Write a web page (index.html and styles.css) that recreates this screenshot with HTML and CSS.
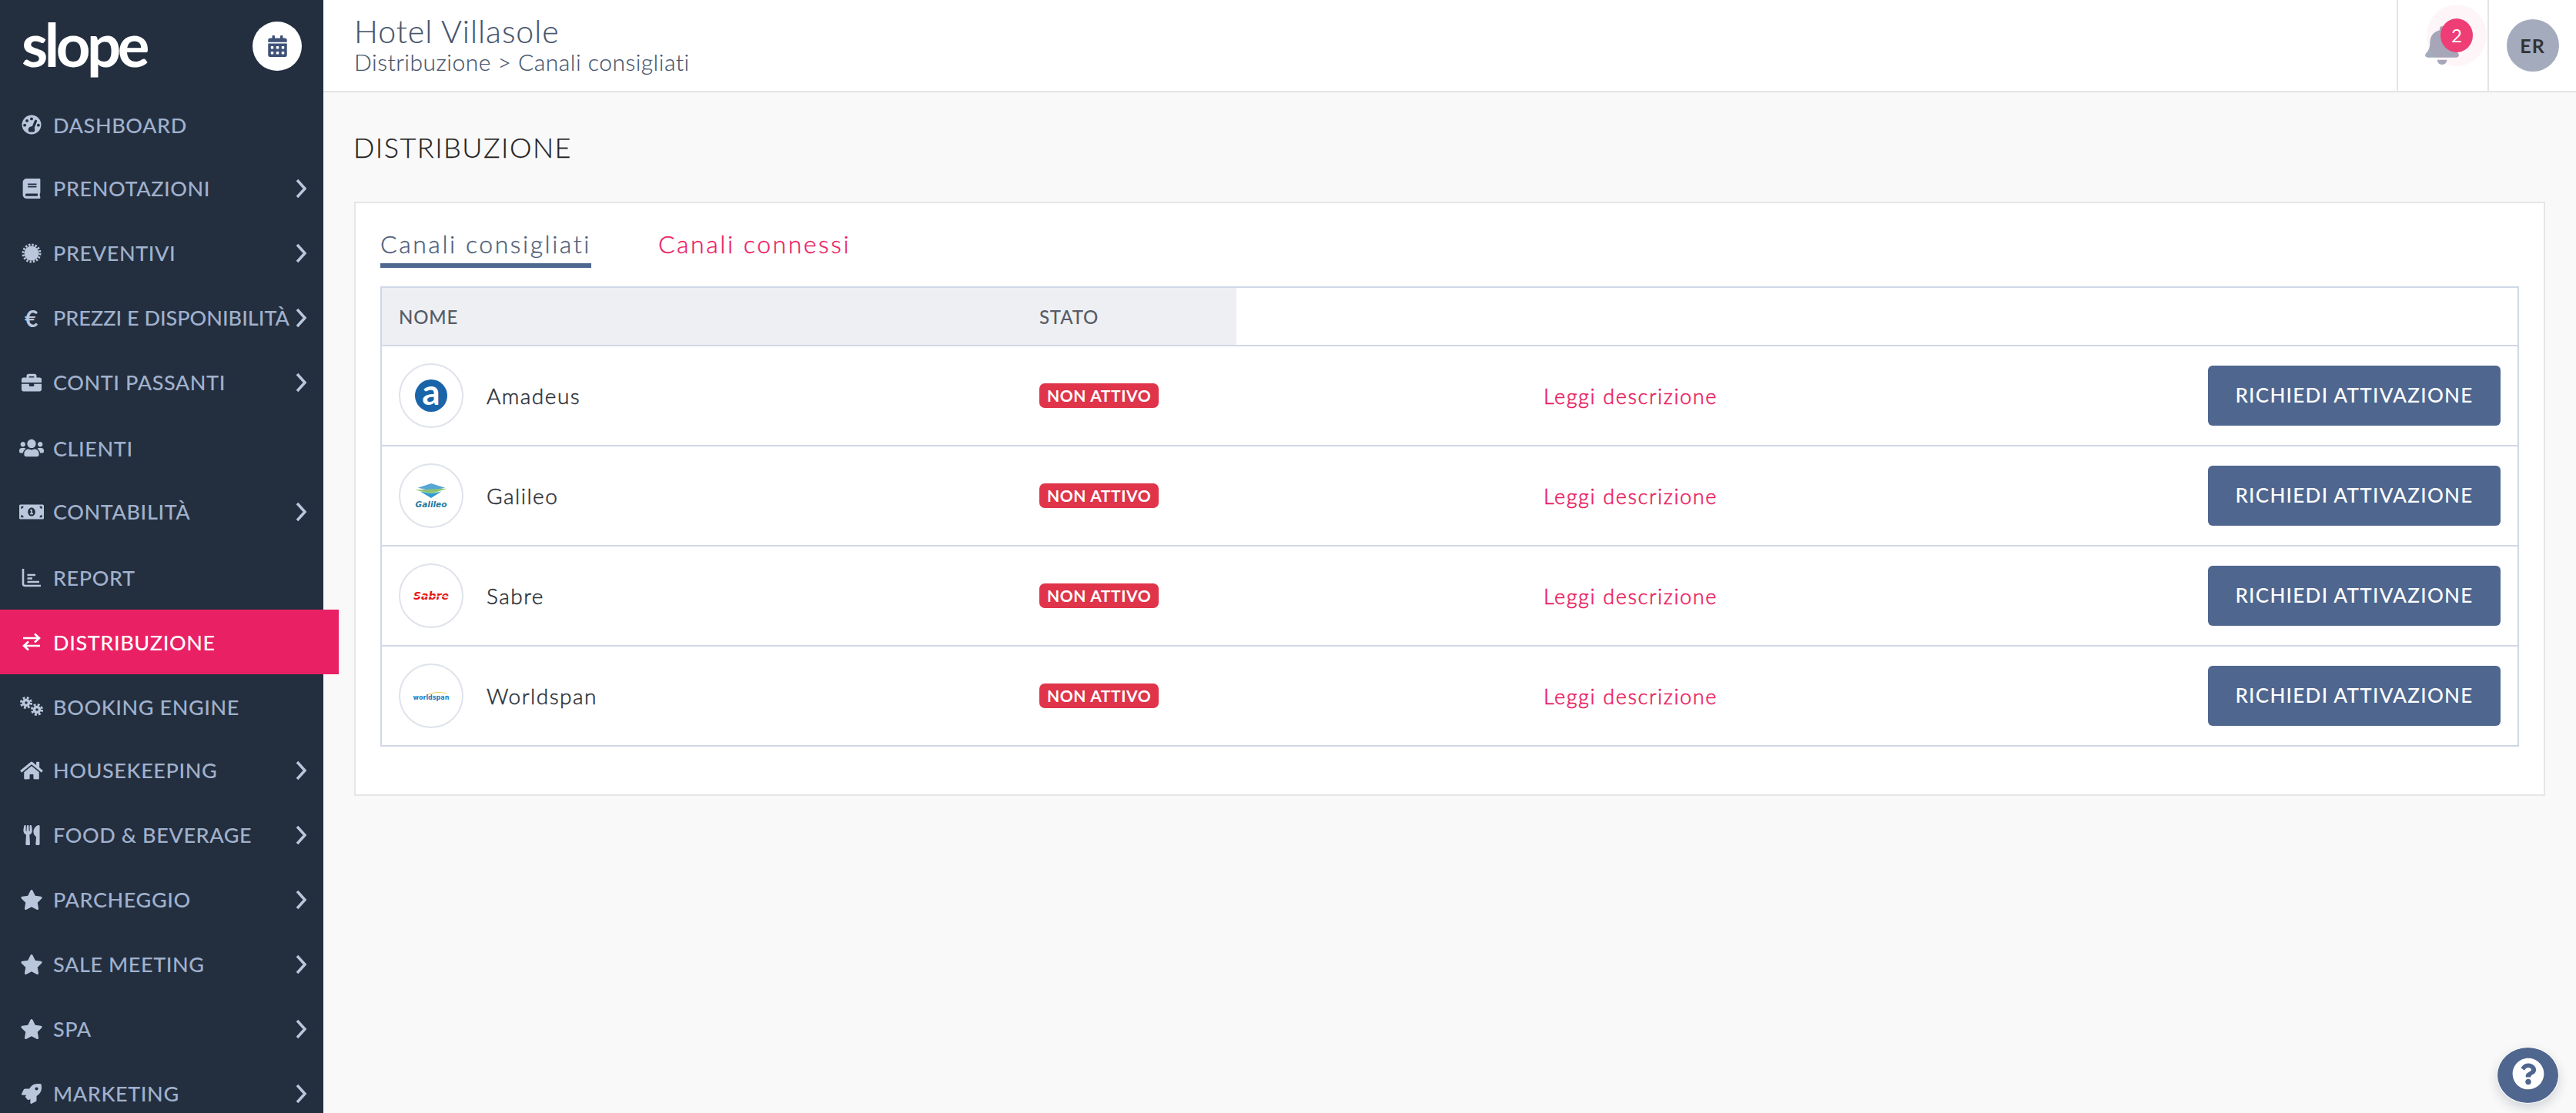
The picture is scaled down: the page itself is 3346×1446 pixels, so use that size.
FILE: index.html
```html
<!DOCTYPE html>
<html lang="it">
<head>
    <meta charset="UTF-8">
    <meta name="viewport" content="width=device-width, initial-scale=1.0">
    <title>Distribuzione - Slope</title>
    <link rel="stylesheet" href="styles.css">
</head>
<body>
    <aside class="sidebar">
        <div class="brand">
            <span class="logo">slope</span>
            <a class="calendar-btn" href="#">
                <svg viewBox="0 0 448 512"><path d="M0 464c0 26.500 21.500 48 48 48h352c26.500 0 48-21.500 48-48V192H0v272zm320-196c0-6.600 5.400-12 12-12h40c6.600 0 12 5.400 12 12v40c0 6.600-5.400 12-12 12h-40c-6.600 0-12-5.400-12-12v-40zm0 128c0-6.600 5.400-12 12-12h40c6.600 0 12 5.400 12 12v40c0 6.600-5.400 12-12 12h-40c-6.600 0-12-5.400-12-12v-40zM192 268c0-6.600 5.400-12 12-12h40c6.600 0 12 5.400 12 12v40c0 6.600-5.400 12-12 12h-40c-6.600 0-12-5.400-12-12v-40zm0 128c0-6.600 5.400-12 12-12h40c6.600 0 12 5.400 12 12v40c0 6.600-5.400 12-12 12h-40c-6.600 0-12-5.400-12-12v-40zM64 268c0-6.600 5.400-12 12-12h40c6.600 0 12 5.400 12 12v40c0 6.600-5.400 12-12 12H76c-6.600 0-12-5.400-12-12v-40zm0 128c0-6.600 5.400-12 12-12h40c6.600 0 12 5.400 12 12v40c0 6.600-5.400 12-12 12H76c-6.600 0-12-5.400-12-12v-40zM400 64h-48V16c0-8.800-7.200-16-16-16h-32c-8.800 0-16 7.200-16 16v48H160V16c0-8.800-7.200-16-16-16h-32c-8.800 0-16 7.200-16 16v48H48C21.500 64 0 85.500 0 112v48h448v-48c0-26.500-21.500-48-48-48z"/></svg>
            </a>
        </div>
        <nav class="menu">
            <a class="menu-item" href="#">
                <svg class="menu-icon" viewBox="0 0 24 24"><path fill-rule="evenodd" d="M12 .5a11.500 11.500 0 1 0 0 23 11.500 11.500 0 0 0 0-23zM12 3.200a1.800 1.800 0 1 1 0 3.600 1.800 1.800 0 0 1 0-3.600zM6.500 5.500a1.800 1.800 0 1 1 0 3.600 1.800 1.800 0 0 1 0-3.600zM3.800 10.800a1.800 1.800 0 1 1 0 3.600 1.800 1.800 0 0 1 0-3.600zM20.200 10.800a1.800 1.800 0 1 1 0 3.600 1.800 1.800 0 0 1 0-3.600zM17.500 6.200a1.500 1.500 0 0 1 1 1.900l-3.200 7.800a3.600 3.600 0 0 1 .7 2.100c0 1-.4 2-1 2.700H9c-.6-.7-1-1.700-1-2.700a4 4 0 0 1 4.700-3.900l3-7.200a1.500 1.500 0 0 1 1.800-.7z"/></svg>
                <span class="menu-label">DASHBOARD</span>
            </a>
            <a class="menu-item" href="#">
                <svg class="menu-icon" viewBox="0 0 448 512"><path d="M448 360V24c0-13.300-10.700-24-24-24H96C43 0 0 43 0 96v320c0 53 43 96 96 96h328c13.300 0 24-10.700 24-24v-16c0-7.500-3.500-14.300-8.900-18.700-4.200-15.400-4.200-59.300 0-74.700 5.400-4.300 8.900-11.100 8.900-18.600zM128 134c0-3.300 2.700-6 6-6h212c3.300 0 6 2.700 6 6v20c0 3.300-2.700 6-6 6H134c-3.300 0-6-2.700-6-6v-20zm0 64c0-3.300 2.700-6 6-6h212c3.300 0 6 2.700 6 6v20c0 3.300-2.700 6-6 6H134c-3.300 0-6-2.700-6-6v-20zm253.400 250H96c-17.700 0-32-14.300-32-32 0-17.600 14.400-32 32-32h285.400c-1.900 17.100-1.900 46.900 0 64z"/></svg>
                <span class="menu-label">PRENOTAZIONI</span>
                <svg class="chevron" viewBox="0 0 14 26"><path d="M2 2l10 11L2 24"/></svg>
            </a>
            <a class="menu-item" href="#">
                <svg class="menu-icon" viewBox="0 0 26 26"><circle cx="13" cy="13" r="9.500"/><circle class="teeth" cx="13" cy="13" r="11" stroke-dasharray="2.400 1.920"/></svg>
                <span class="menu-label">PREVENTIVI</span>
                <svg class="chevron" viewBox="0 0 14 26"><path d="M2 2l10 11L2 24"/></svg>
            </a>
            <a class="menu-item" href="#">
                <span class="menu-icon euro">€</span>
                <span class="menu-label tight">PREZZI E DISPONIBILITÀ</span>
                <svg class="chevron" viewBox="0 0 14 26"><path d="M2 2l10 11L2 24"/></svg>
            </a>
            <a class="menu-item" href="#">
                <svg class="menu-icon" viewBox="0 0 512 512"><path d="M320 336c0 8.840-7.160 16-16 16h-96c-8.840 0-16-7.160-16-16v-48H0v144c0 25.600 22.400 48 48 48h416c25.600 0 48-22.400 48-48V288H320v48zm144-208h-80V80c0-25.600-22.400-48-48-48H176c-25.600 0-48 22.400-48 48v48H48c-25.600 0-48 22.400-48 48v80h512v-80c0-25.600-22.400-48-48-48zm-144 0H192V96h128v32z"/></svg>
                <span class="menu-label">CONTI PASSANTI</span>
                <svg class="chevron" viewBox="0 0 14 26"><path d="M2 2l10 11L2 24"/></svg>
            </a>
            <a class="menu-item" href="#">
                <svg class="menu-icon wide" viewBox="0 0 640 512"><path d="M96 224c35.300 0 64-28.700 64-64s-28.700-64-64-64-64 28.700-64 64 28.700 64 64 64zm448 0c35.300 0 64-28.700 64-64s-28.700-64-64-64-64 28.700-64 64 28.700 64 64 64zm32 32h-64c-17.600 0-33.500 7.100-45.100 18.600 40.300 22.100 68.900 62 75.100 109.400h66c17.700 0 32-14.300 32-32v-32c0-35.300-28.700-64-64-64zm-256 0c61.900 0 112-50.100 112-112S381.900 32 320 32 208 82.100 208 144s50.100 112 112 112zm76.800 32h-8.300c-20.800 10-43.900 16-68.500 16s-47.600-6-68.500-16h-8.300C179.600 288 128 339.600 128 403.200V432c0 26.500 21.500 48 48 48h288c26.500 0 48-21.500 48-48v-28.800c0-63.600-51.600-115.200-115.200-115.200zm-223.700-13.400C161.500 263.100 145.600 256 128 256H64c-35.300 0-64 28.700-64 64v32c0 17.700 14.300 32 32 32h65.900c6.300-47.400 34.900-87.300 75.200-109.400z"/></svg>
                <span class="menu-label">CLIENTI</span>
            </a>
            <a class="menu-item" href="#">
                <svg class="menu-icon wide" viewBox="0 0 640 512"><path d="M352 288h-16v-88c0-4.420-3.580-8-8-8h-13.580c-4.740 0-9.370 1.400-13.310 4.030l-15.330 10.220a7.994 7.994 0 0 0-2.220 11.090l8.880 13.310a7.994 7.994 0 0 0 11.090 2.220l.47-.31V288h-16c-4.420 0-8 3.580-8 8v16c0 4.420 3.580 8 8 8h64c4.420 0 8-3.580 8-8v-16c0-4.420-3.580-8-8-8zM608 64H32C14.330 64 0 78.330 0 96v320c0 17.670 14.330 32 32 32h576c17.670 0 32-14.330 32-32V96c0-17.670-14.330-32-32-32zM48 400v-64c35.350 0 64 28.650 64 64H48zm0-224v-64h64c0 35.350-28.650 64-64 64zm272 192c-53 0-96-50.150-96-112 0-61.860 43-112 96-112s96 50.140 96 112c0 61.870-43.010 112-96 112zm272 32h-64c0-35.350 28.650-64 64-64v64zm0-224c-35.350 0-64-28.650-64-64h64v64z"/></svg>
                <span class="menu-label">CONTABILITÀ</span>
                <svg class="chevron" viewBox="0 0 14 26"><path d="M2 2l10 11L2 24"/></svg>
            </a>
            <a class="menu-item" href="#">
                <svg class="menu-icon line" viewBox="0 0 26 26"><path d="M2 2v19.500q0 2.500 2.500 2.500H25"/><path d="M7.500 10H18M7.500 14.500H14M7.500 19H23"/></svg>
                <span class="menu-label">REPORT</span>
            </a>
            <a class="menu-item active" href="#">
                <svg class="menu-icon line" viewBox="0 0 26 26"><path d="M2 8h21M17 2.500L23 8l-6 5.500"/><path d="M24 18H3M9 12.500L3 18l6 5.500"/></svg>
                <span class="menu-label">DISTRIBUZIONE</span>
            </a>
            <a class="menu-item" href="#">
                <svg class="menu-icon wide" viewBox="0 0 32 26"><g transform="translate(9 8)"><circle class="hub" r="3.500"/><circle class="teeth" r="6.500" stroke-width="2.600" stroke-dasharray="2.800 2.300"/></g><g transform="translate(23 17)"><circle class="hub" r="3.500"/><circle class="teeth" r="6.500" stroke-width="2.600" stroke-dasharray="2.800 2.300"/></g></svg>
                <span class="menu-label">BOOKING ENGINE</span>
            </a>
            <a class="menu-item" href="#">
                <svg class="menu-icon wide" viewBox="0 0 576 512"><path d="M280.370 148.260L96 300.110V464a16 16 0 0 0 16 16l112.060-.29a16 16 0 0 0 15.920-16V368a16 16 0 0 1 16-16h64a16 16 0 0 1 16 16v95.640a16 16 0 0 0 16 16.050L464 480a16 16 0 0 0 16-16V300L295.670 148.260a12.190 12.190 0 0 0-15.300 0zM571.600 251.470L488 182.560V44.050a12 12 0 0 0-12-12h-56a12 12 0 0 0-12 12v72.610L318.470 43a48 48 0 0 0-61 0L4.340 251.470a12 12 0 0 0-1.600 16.900l25.500 31A12 12 0 0 0 45.150 301l235.220-193.740a12.190 12.190 0 0 1 15.300 0L530.900 301a12 12 0 0 0 16.900-1.600l25.500-31a12 12 0 0 0-1.700-16.930z"/></svg>
                <span class="menu-label">HOUSEKEEPING</span>
                <svg class="chevron" viewBox="0 0 14 26"><path d="M2 2l10 11L2 24"/></svg>
            </a>
            <a class="menu-item" href="#">
                <svg class="menu-icon" viewBox="0 0 416 512"><path d="M207.900 15.200c.8 4.700 16.100 94.500 16.100 128.800 0 52.300-27.800 89.600-68.900 104.600L168 486.700c.7 13.700-10.200 25.300-24 25.300H80c-13.700 0-24.700-11.500-24-25.300l12.900-238.100C27.700 233.600 0 196.200 0 144 0 109.600 15.300 19.900 16.100 15.200 19.300-5.100 61.400-5.400 64 16.300v141.200c1.300 3.400 15.100 3.200 16 0 1.400-25.300 7.900-139.200 8-141.800 3.300-20.800 44.700-20.800 47.900 0 .2 2.700 6.600 116.500 8 141.800.9 3.200 14.800 3.400 16 0V16.300c2.600-21.600 44.800-21.400 48 .1zm119.200 285.700l-15 185.100c-1.200 14 9.900 26 23.900 26h56c13.300 0 24-10.700 24-24V24c0-13.200-10.700-24-24-24-82.500 0-221.400 178.500-64.900 300.900z"/></svg>
                <span class="menu-label">FOOD &amp; BEVERAGE</span>
                <svg class="chevron" viewBox="0 0 14 26"><path d="M2 2l10 11L2 24"/></svg>
            </a>
            <a class="menu-item" href="#">
                <svg class="menu-icon wide" viewBox="0 0 576 512"><path d="M259.300 17.800L194 150.200 47.900 171.500c-26.200 3.800-36.700 36.100-17.700 54.600l105.700 103-25 145.500c-4.500 26.300 23.200 46 46.400 33.700L288 439.600l130.700 68.700c23.200 12.200 50.900-7.400 46.400-33.700l-25-145.500 105.700-103c19-18.500 8.500-50.800-17.700-54.600L382 150.200 316.700 17.800c-11.700-23.600-45.600-23.900-57.400 0z"/></svg>
                <span class="menu-label">PARCHEGGIO</span>
                <svg class="chevron" viewBox="0 0 14 26"><path d="M2 2l10 11L2 24"/></svg>
            </a>
            <a class="menu-item" href="#">
                <svg class="menu-icon wide" viewBox="0 0 576 512"><path d="M259.300 17.800L194 150.200 47.900 171.500c-26.200 3.800-36.700 36.100-17.700 54.600l105.700 103-25 145.500c-4.500 26.300 23.200 46 46.400 33.700L288 439.600l130.700 68.700c23.200 12.200 50.900-7.400 46.400-33.700l-25-145.500 105.700-103c19-18.500 8.500-50.800-17.700-54.600L382 150.200 316.700 17.800c-11.700-23.600-45.600-23.900-57.400 0z"/></svg>
                <span class="menu-label">SALE MEETING</span>
                <svg class="chevron" viewBox="0 0 14 26"><path d="M2 2l10 11L2 24"/></svg>
            </a>
            <a class="menu-item" href="#">
                <svg class="menu-icon wide" viewBox="0 0 576 512"><path d="M259.300 17.800L194 150.200 47.900 171.500c-26.200 3.800-36.700 36.100-17.700 54.600l105.700 103-25 145.500c-4.500 26.300 23.200 46 46.400 33.700L288 439.600l130.700 68.700c23.200 12.200 50.900-7.400 46.400-33.700l-25-145.500 105.700-103c19-18.500 8.500-50.800-17.700-54.600L382 150.200 316.700 17.800c-11.700-23.600-45.600-23.900-57.400 0z"/></svg>
                <span class="menu-label">SPA</span>
                <svg class="chevron" viewBox="0 0 14 26"><path d="M2 2l10 11L2 24"/></svg>
            </a>
            <a class="menu-item" href="#">
                <svg class="menu-icon" viewBox="0 0 512 512"><path d="M505.120 19.090c-1.190-5.530-6.660-11-12.210-12.190C460.720 0 435.510 0 410.410 0 307.180 0 245.270 55.200 199.050 128H94.840c-16.350.02-35.560 11.880-42.890 26.480L2.520 253.300A28.400 28.400 0 0 0 0 264a24 24 0 0 0 24 24h103.820l-22.480 22.470c-11.360 11.360-13 32.260 0 45.250l50.900 50.900c11.160 11.190 32.160 13.160 45.280 0l22.480-22.470V488a24 24 0 0 0 24 24 28.560 28.560 0 0 0 10.710-2.520l98.730-49.390c14.630-7.300 26.510-26.500 26.510-42.860V312.800c72.600-46.310 128.030-108.410 128.030-211.100.01-25.200.01-50.400-6.950-82.610zM384.040 168a40 40 0 1 1 40.010-40 40.020 40.020 0 0 1-40.010 40z"/></svg>
                <span class="menu-label">MARKETING</span>
                <svg class="chevron" viewBox="0 0 14 26"><path d="M2 2l10 11L2 24"/></svg>
            </a>
        </nav>
    </aside>

    <div class="main">
        <header class="topbar">
            <div class="hotel">
                <div class="hotel-name">Hotel Villasole</div>
                <div class="breadcrumb">Distribuzione &gt; Canali consigliati</div>
            </div>
            <div class="notifications">
                <svg class="bell" viewBox="0 0 448 512"><path d="M224 512c35.320 0 63.970-28.650 63.970-64H160.030c0 35.350 28.650 64 63.970 64zm215.390-149.710c-19.320-20.760-55.470-51.990-55.470-154.290 0-77.700-54.480-139.900-127.940-155.160V32c0-17.670-14.320-32-31.980-32s-31.980 14.330-31.980 32v20.840C118.560 68.100 64.080 130.300 64.080 208c0 102.300-36.150 133.530-55.470 154.290-6 6.450-8.660 14.160-8.610 21.710.11 16.400 12.980 32 32.100 32h383.800c19.120 0 32-15.600 32.100-32 .05-7.550-2.610-15.270-8.610-21.710z"/></svg>
                <span class="notif-halo"></span>
                <span class="notif-count">2</span>
            </div>
            <div class="account">
                <span class="avatar">ER</span>
            </div>
        </header>

        <main class="content">
            <h1 class="page-title">DISTRIBUZIONE</h1>
            <section class="card">
                <div class="tabs">
                    <a class="tab current" href="#">Canali consigliati</a>
                    <a class="tab" href="#">Canali connessi</a>
                </div>
                <table class="channels">
                    <thead>
                        <tr>
                            <th class="col-name">NOME</th>
                            <th class="col-state">STATO</th>
                            <th class="col-plain"></th>
                            <th class="col-plain"></th>
                        </tr>
                    </thead>
                    <tbody>
                        <tr>
                            <td>
                                <div class="channel">
                                    <span class="channel-logo">
                                        <span class="amadeus">a</span>
                                    </span>
                                    Amadeus
                                </div>
                            </td>
                            <td><span class="state">NON ATTIVO</span></td>
                            <td class="col-link"><a class="read-more" href="#">Leggi descrizione</a></td>
                            <td class="col-action"><a class="btn" href="#">RICHIEDI ATTIVAZIONE</a></td>
                        </tr>
                        <tr>
                            <td>
                                <div class="channel">
                                    <span class="channel-logo galileo">
                                        <svg viewBox="0 0 46 22"><path fill="#58a6d6" d="M23 1l19 6-19 4L5 7z"/><path fill="#8cc46f" d="M1 10l44-2-22 7z"/><path fill="#2f9bd0" d="M8 12l15 3 14-3-14 9z"/></svg>
                                        <span class="galileo-name">Galileo</span>
                                    </span>
                                    Galileo
                                </div>
                            </td>
                            <td><span class="state">NON ATTIVO</span></td>
                            <td class="col-link"><a class="read-more" href="#">Leggi descrizione</a></td>
                            <td class="col-action"><a class="btn" href="#">RICHIEDI ATTIVAZIONE</a></td>
                        </tr>
                        <tr>
                            <td>
                                <div class="channel">
                                    <span class="channel-logo">
                                        <span class="sabre">Sabre</span>
                                    </span>
                                    Sabre
                                </div>
                            </td>
                            <td><span class="state">NON ATTIVO</span></td>
                            <td class="col-link"><a class="read-more" href="#">Leggi descrizione</a></td>
                            <td class="col-action"><a class="btn" href="#">RICHIEDI ATTIVAZIONE</a></td>
                        </tr>
                        <tr>
                            <td>
                                <div class="channel">
                                    <span class="channel-logo worldspan">
                                        <svg viewBox="0 0 30 5"><path d="M2 5Q15-1 28 3"/></svg>
                                        <span class="worldspan-name">worldspan</span>
                                    </span>
                                    Worldspan
                                </div>
                            </td>
                            <td><span class="state">NON ATTIVO</span></td>
                            <td class="col-link"><a class="read-more" href="#">Leggi descrizione</a></td>
                            <td class="col-action"><a class="btn" href="#">RICHIEDI ATTIVAZIONE</a></td>
                        </tr>
                    </tbody>
                </table>
            </section>
        </main>
    </div>

    <a class="help-btn" href="#">
        <svg viewBox="0 0 512 512"><path d="M504 256c0 136.997-111.043 248-248 248S8 392.997 8 256C8 119.083 119.043 8 256 8s248 111.083 248 248zM262.655 90c-54.497 0-89.255 22.957-116.549 63.758-3.536 5.286-2.353 12.415 2.715 16.258l34.699 26.310c5.205 3.947 12.621 3.008 16.665-2.122 17.864-22.658 30.113-35.797 57.303-35.797 20.429 0 45.698 13.148 45.698 32.958 0 14.976-12.363 22.667-32.534 33.976C247.128 238.528 216 254.941 216 296v4c0 6.627 5.373 12 12 12h56c6.627 0 12-5.373 12-12v-1.333c0-28.462 83.186-29.647 83.186-106.667 0-58.002-60.165-102-116.531-102zM256 338c-25.365 0-46 20.635-46 46 0 25.364 20.635 46 46 46s46-20.636 46-46c0-25.365-20.635-46-46-46z"/></svg>
    </a>
</body>
</html>
```

FILE: styles.css
```css
html, body {
    height: 100%;
    margin: 0;
    overflow: hidden;
}
body {
    display: flex;
    font-family: Lato, "Open Sans", sans-serif;
    background: #f9f9f9;
    color: #2b2f36;
}
a {
    text-decoration: none;
}

/* sidebar */
.sidebar {
    flex: 0 0 420px;
    width: 420px;
    min-width: 0;
    background: #232f3f;
    position: relative;
    z-index: 2;
}
.brand {
    height: 120px;
    display: flex;
    align-items: center;
    justify-content: space-between;
    padding: 0 28px;
}
.logo {
    color: #fff;
    font-weight: 700;
    font-size: 78px;
    line-height: 80px;
    letter-spacing: -4.500px;
    margin-top: -6px;
}
.calendar-btn {
    width: 64px;
    height: 64px;
    border-radius: 50%;
    background: #fff;
    display: flex;
    align-items: center;
    justify-content: center;
    margin-top: -1px;
}
.calendar-btn svg {
    width: 25px;
    height: 28px;
    fill: #3f5178;
}
.menu-item {
    display: flex;
    align-items: center;
    box-sizing: border-box;
    height: 84px;
    padding: 0 22px 0 28px;
    color: #a1b1cd;
    font-size: 27px;
    font-weight: 500;
    letter-spacing: .6px;
}
.menu-item:has(.chevron) {
    padding-bottom: 3px;
}
.menu-item.active {
    width: 440px;
    background: #e92064;
    color: #fff;
}
.menu-icon {
    flex: 0 0 26px;
    width: 26px;
    height: 26px;
    margin-right: 15px;
    fill: #b9c6dc;
}
.menu-icon.wide {
    flex: 0 0 32px;
    width: 32px;
    margin: 0 12px 0 -3px;
}
.menu-icon .teeth {
    fill: none;
    stroke: #b9c6dc;
    stroke-width: 3;
}
.menu-icon .hub {
    fill: none;
    stroke: #b9c6dc;
    stroke-width: 3.500;
}
.menu-icon.line {
    fill: none;
    stroke: #b9c6dc;
    stroke-width: 2.600;
}
.active .menu-icon.line {
    stroke: #fff;
}
.euro {
    font-size: 30px;
    line-height: 26px;
    font-weight: 700;
    text-align: center;
    color: #b9c6dc;
}
.menu-label {
    flex: 1;
    white-space: nowrap;
}
.menu-label.tight {
    letter-spacing: 0;
}
.chevron {
    flex: 0 0 14px;
    width: 14px;
    height: 26px;
    fill: none;
    stroke: #b9c6dc;
    stroke-width: 3.500;
}

/* top bar */
.main {
    flex: 1;
    min-width: 0;
}
.topbar {
    height: 118px;
    display: flex;
    background: #fff;
    border-bottom: 2px solid #e4e4e4;
}
.hotel {
    flex: 1;
    padding: 19px 0 0 40px;
    color: #46546c;
    font-weight: 300;
    -webkit-text-stroke: .2px;
}
.hotel-name {
    font-size: 41px;
    line-height: 44px;
    letter-spacing: 1px;
}
.breadcrumb {
    font-size: 30px;
    line-height: 34px;
    letter-spacing: .5px;
}
.notifications {
    flex: 0 0 116px;
    position: relative;
    border-left: 2px solid #e4e4e4;
}
.bell {
    position: absolute;
    left: 35px;
    top: 34px;
    width: 44px;
    height: 50px;
    fill: #a4abbc;
}
.notif-halo {
    position: absolute;
    left: 37px;
    top: 6px;
    width: 78px;
    height: 80px;
    border-radius: 50%;
    background: rgba(240, 61, 118, .05);
}
.notif-count {
    position: absolute;
    left: 55px;
    top: 24px;
    width: 42px;
    height: 44px;
    border-radius: 50%;
    background: #ef3d76;
    color: #fff;
    font-size: 24px;
    line-height: 44px;
    text-align: center;
}
.account {
    flex: 0 0 113px;
    display: flex;
    align-items: center;
    justify-content: center;
    border-left: 2px solid #e4e4e4;
}
.avatar {
    width: 68px;
    height: 68px;
    border-radius: 50%;
    background: #a4abbc;
    color: #333;
    font-size: 25px;
    font-weight: 700;
    letter-spacing: 1px;
    line-height: 68px;
    text-align: center;
}

/* content */
.content {
    padding: 0 40px;
}
.page-title {
    margin: 0 0 0 -1px;
    height: 142px;
    line-height: 142px;
    font-size: 36px;
    font-weight: 300;
    letter-spacing: 1.500px;
    color: #222;
    -webkit-text-stroke: .25px;
}
.card {
    background: #fff;
    border: 2px solid #e6e6e6;
    padding: 0 32px 62px;
}
.tabs {
    display: flex;
    gap: 87px;
    height: 84px;
    margin-bottom: 24px;
}
.tab {
    height: 78px;
    padding-top: 30px;
    box-sizing: border-box;
    font-size: 32px;
    font-weight: 300;
    line-height: 46px;
    letter-spacing: 2.550px;
    color: #ea1e63;
    white-space: nowrap;
    -webkit-text-stroke: .4px;
}
.tab.current {
    height: 84px;
    color: #505f79;
    border-bottom: 6px solid #4f668f;
}
.channels {
    width: 100%;
    table-layout: fixed;
    border-collapse: separate;
    border-spacing: 0;
    border: 2px solid #cfd8e6;
    border-bottom: 0;
}
.channels th {
    height: 74px;
    padding: 0 22px;
    border-bottom: 2px solid #cfd8e6;
    text-align: left;
    font-size: 24px;
    font-weight: 500;
    letter-spacing: .8px;
    color: #555c66;
}
.col-name {
    width: 788px;
    background: #edeff3;
}
.col-state {
    width: 234px;
    background: #edeff3;
}
.col-plain:last-child {
    width: 426px;
}
.channels td {
    height: 128px;
    padding: 0 22px;
    border-bottom: 2px solid #cfd8e6;
}
.channel {
    display: flex;
    align-items: center;
    gap: 30px;
    font-size: 28px;
    font-weight: 300;
    letter-spacing: 1.500px;
    -webkit-text-stroke: .5px;
}
.channel-logo {
    width: 84px;
    height: 84px;
    box-sizing: border-box;
    border: 2px solid #dfe3ea;
    border-radius: 50%;
    display: flex;
    flex-direction: column;
    align-items: center;
    justify-content: center;
    letter-spacing: 0;
    -webkit-text-stroke: 0;
}
.amadeus {
    width: 42px;
    height: 42px;
    border-radius: 50%;
    background: #1a64a9;
    color: #fff;
    font-size: 46px;
    font-weight: 700;
    line-height: 31px;
    text-align: center;
}
.galileo svg {
    width: 44px;
    height: 21px;
}
.galileo-name {
    color: #1f7ba3;
    font-family: "DejaVu Sans", sans-serif;
    font-size: 10.500px;
    line-height: 14px;
    font-weight: 700;
    font-style: italic;
}
.sabre {
    color: #e8110f;
    font-family: "DejaVu Sans", sans-serif;
    font-size: 14px;
    font-weight: 700;
    font-style: italic;
    text-decoration: line-through;
    text-decoration-color: #fff;
    text-decoration-thickness: 1px;
}
.worldspan svg {
    width: 30px;
    height: 5px;
    margin-left: 14px;
    fill: none;
    stroke: #f2cf5a;
    stroke-width: 1;
}
.worldspan-name {
    color: #1f78bd;
    font-family: "DejaVu Sans", sans-serif;
    font-size: 8px;
    line-height: 8px;
    font-weight: 700;
}
.state {
    display: inline-block;
    height: 32px;
    padding: 0 10px;
    border-radius: 7px;
    background: #e0344b;
    color: #fff;
    font-size: 21px;
    font-weight: 700;
    line-height: 31px;
    letter-spacing: .6px;
}
.col-link {
    padding-left: 399px !important;
}
.read-more {
    color: #ea1e63;
    font-size: 27px;
    font-weight: 300;
    letter-spacing: 1.650px;
    white-space: nowrap;
    -webkit-text-stroke: .6px;
}
.col-action {
    text-align: right;
}
.btn {
    display: inline-block;
    width: 380px;
    height: 78px;
    border-radius: 6px;
    background: #4f668f;
    color: #fff;
    font-size: 26px;
    font-weight: 500;
    line-height: 76px;
    letter-spacing: 1.300px;
    text-align: center;
}

/* help button */
.help-btn {
    position: absolute;
    left: 3243px;
    top: 1360px;
    width: 81px;
    height: 74px;
    box-sizing: border-box;
    border-radius: 50%;
    border: 1px solid #fff;
    background: #4f668f;
    box-shadow: 0 6px 14px rgba(40, 50, 70, .18);
    display: flex;
    align-items: center;
    justify-content: center;
}
.help-btn svg {
    width: 42px;
    height: 42px;
    fill: #fff;
    margin-top: -4px;
}
```
